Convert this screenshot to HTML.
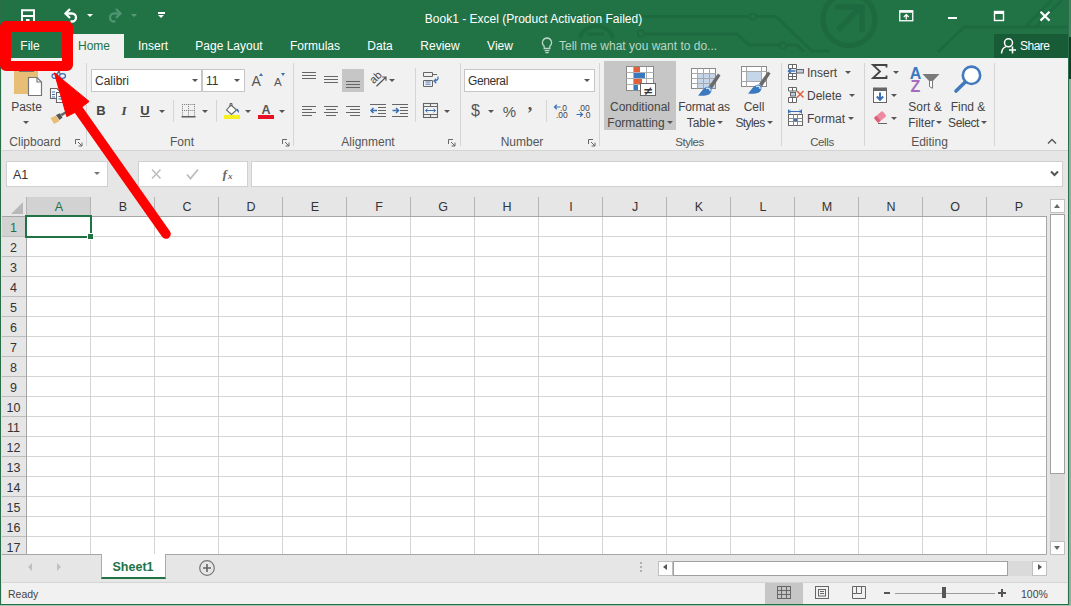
<!DOCTYPE html>
<html>
<head>
<meta charset="utf-8">
<title>Book1 - Excel</title>
<style>
html,body{margin:0;padding:0;}
body{width:1071px;height:606px;overflow:hidden;background:#e6e6e6;font-family:"Liberation Sans",sans-serif;font-size:12px;color:#444;position:relative;}
.abs{position:absolute;}
.t{position:absolute;white-space:nowrap;line-height:16px;height:16px;}
.c{transform:translateX(-50%);}
#win{position:absolute;left:0;top:0;width:1071px;height:606px;overflow:hidden;}
#titlebar{left:0;top:0;width:1071px;height:58px;background:#217346;}
#ribbon{left:2px;top:58px;width:1066px;height:92px;background:#f1f1f1;}
#ribline{left:2px;top:150px;width:1066px;height:1px;background:#d4d4d4;}
.tab{color:#fff;font-size:12px;top:38px;}
.lbl{color:#555;font-size:12px;top:134px;}
.sep{position:absolute;width:1px;background:#d5d5d5;top:63px;height:83px;}
.box{position:absolute;background:#fff;border:1px solid #c6c6c6;box-sizing:border-box;}
.dd{position:absolute;width:0;height:0;border-left:3px solid transparent;border-right:3px solid transparent;border-top:3px solid #555;}
.colh{position:absolute;top:198px;height:18px;line-height:18px;text-align:center;width:64px;color:#333;font-size:12.5px;}
.rowh{position:absolute;left:2px;width:23px;height:20px;line-height:20px;text-align:center;color:#333;font-size:12.5px;}
</style>
</head>
<body>
<div id="win">

<!-- ===== title bar + tab strip ===== -->
<div id="titlebar" class="abs"></div>
<!-- decorative circuit pattern -->
<svg class="abs" style="left:560px;top:0" width="511" height="58" viewBox="560 0 511 58">
  <g fill="none" stroke="#1e6a40" stroke-width="3">
    <path d="M560 16.500 H749 M756.500 16.500 H776 L812 51 H830"/>
    <circle cx="753" cy="16.500" r="3.300" stroke-width="2"/>
    <path d="M645 34 H737 L749 45 H779 M786.500 45 H797 L804 52"/>
    <circle cx="641" cy="33.500" r="3.300" stroke-width="2"/>
    <circle cx="783" cy="45.500" r="3.300" stroke-width="2"/>
    <circle cx="849" cy="19.500" r="26" stroke-width="5.500"/>
    <path d="M838 30 L859 9" stroke-width="6"/>
    <path d="M835 7 H862 V32" stroke-width="5.500"/>
    <path d="M938 52 L964 27 H1071"/>
    <path d="M1026 26 L1052 0 M1036 26 L1062 0"/>
    <path d="M579.500 38 A18 18 0 0 1 613.500 38" stroke-width="4"/>
    <path d="M587 34 H604"/>
  </g>
</svg>

<!-- quick access toolbar -->
<svg class="abs" style="left:20px;top:8px" width="16" height="15" viewBox="0 0 16 15">
  <path d="M2 2.200 H14 V14 H2 Z" fill="none" stroke="#fff" stroke-width="2"/>
  <rect x="2" y="7" width="12" height="2" fill="#fff"/>
  <rect x="6" y="11" width="3.500" height="3" fill="#fff"/>
</svg>
<svg class="abs" style="left:63px;top:7px" width="17" height="16" viewBox="0 0 17 16">
  <path d="M3 6.500 H9 A4 4 0 0 1 9 14.500 H7.500" fill="none" stroke="#fff" stroke-width="2.300"/>
  <path d="M7 2 L2.500 6.500 L7 11" fill="none" stroke="#fff" stroke-width="2.300"/>
</svg>
<div class="dd" style="left:87px;top:14px;border-top-color:#fff;"></div>
<svg class="abs" style="left:106px;top:7px" width="17" height="16" viewBox="0 0 17 16">
  <path d="M14 6.500 H8 A4 4 0 0 0 8 14.500 H9.500" fill="none" stroke="#4f9471" stroke-width="2.300"/>
  <path d="M10 2 L14.500 6.500 L10 11" fill="none" stroke="#4f9471" stroke-width="2.300"/>
</svg>
<div class="dd" style="left:131px;top:14px;border-top-color:#5c9c7b;"></div>
<div class="abs" style="left:158px;top:12px;width:7px;height:1.5px;background:#fff;"></div>
<div class="dd" style="left:158px;top:15px;border-left-width:3.5px;border-right-width:3.5px;border-top-width:3.5px;border-top-color:#fff;"></div>

<!-- title -->
<div class="t c" style="left:533.500px;top:11px;color:#fff;font-size:12px;">Book1 - Excel (Product Activation Failed)</div>

<!-- window controls -->
<svg class="abs" style="left:899px;top:10px" width="15" height="12" viewBox="0 0 15 12">
  <rect x="0.75" y="0.75" width="13" height="10" fill="none" stroke="#fff" stroke-width="1.3"/>
  <rect x="0.75" y="0.75" width="13" height="2" fill="#fff"/>
  <path d="M7.25 9.5 V5 M4.8 7 L7.25 4.6 L9.7 7" fill="none" stroke="#fff" stroke-width="1.3"/>
</svg>
<div class="abs" style="left:948px;top:17px;width:9px;height:2px;background:#fff;"></div>
<svg class="abs" style="left:993px;top:10px" width="12" height="12" viewBox="0 0 12 12">
  <rect x="1.5" y="1.5" width="9" height="9" fill="none" stroke="#fff" stroke-width="1.4"/>
  <rect x="1" y="1" width="10" height="3" fill="#fff"/>
</svg>
<svg class="abs" style="left:1039px;top:10px" width="12" height="12" viewBox="0 0 12 12">
  <path d="M1.5 1.8 L10.5 10.6 M10.5 1.8 L1.5 10.6" stroke="#fff" stroke-width="2.2" fill="none"/>
</svg>

<!-- tabs -->
<div class="abs" style="left:73px;top:34px;width:51px;height:24px;background:#f1f1f1;"></div>
<div class="t c tab" style="left:30px;">File</div>
<div class="t c tab" style="left:94px;color:#217346;">Home</div>
<div class="t c tab" style="left:153px;">Insert</div>
<div class="t c tab" style="left:229px;">Page Layout</div>
<div class="t c tab" style="left:315px;">Formulas</div>
<div class="t c tab" style="left:380px;">Data</div>
<div class="t c tab" style="left:440px;">Review</div>
<div class="t c tab" style="left:500px;">View</div>
<svg class="abs" style="left:541px;top:37px" width="12" height="17" viewBox="0 0 12 17">
  <path d="M6 1 A4.6 4.6 0 0 0 3.2 9.2 V11.5 H8.8 V9.2 A4.6 4.6 0 0 0 6 1 Z" fill="none" stroke="#b9d6c6" stroke-width="1.3"/>
  <path d="M3.6 13.6 H8.4 M4.4 15.6 H7.6" stroke="#b9d6c6" stroke-width="1.2"/>
</svg>
<div class="t tab" style="left:559px;color:#b9d6c6;">Tell me what you want to do...</div>

<!-- share -->
<div class="abs" style="left:994px;top:34px;width:74px;height:24px;background:#185c37;"></div>
<svg class="abs" style="left:1000px;top:37px" width="18" height="18" viewBox="0 0 18 18">
  <circle cx="8.5" cy="5.8" r="4" fill="none" stroke="#fff" stroke-width="1.5"/>
  <path d="M1.5 16.5 C1.8 12.5 4 10.2 6.2 9.6" fill="none" stroke="#fff" stroke-width="1.5"/>
  <path d="M12.5 9.5 V16.5 M9 13 H16" stroke="#fff" stroke-width="1.5"/>
</svg>
<div class="t tab" style="left:1020px;letter-spacing:-0.500px;">Share</div>


<!-- ===== ribbon ===== -->
<div id="ribbon" class="abs"></div>
<div id="ribline" class="abs"></div>
<!-- ===== Clipboard ===== -->
<svg class="abs" style="left:10px;top:64px" width="34" height="38" viewBox="0 0 34 38">
  <rect x="4" y="3" width="24" height="27" fill="#e8be76"/>
  <rect x="9" y="1" width="15" height="7" fill="#777"/>
  <path d="M18.500 13.500 H27 L31.500 18 V31.500 H18.500 Z" fill="#fff" stroke="#777" stroke-width="1.200"/>
  <path d="M27 13.500 V18 H31.500" fill="none" stroke="#777" stroke-width="1.200"/>
</svg>
<div class="t c" style="left:26.500px;top:99px;">Paste</div>
<div class="dd" style="left:22.500px;top:121px;"></div>
<!-- cut / copy / painter -->
<svg class="abs" style="left:50px;top:67px" width="18" height="14" viewBox="0 0 18 14">
  <ellipse cx="5" cy="9" rx="3" ry="2.4" fill="none" stroke="#3a6fb5" stroke-width="1.3"/>
  <ellipse cx="12.5" cy="9" rx="3" ry="2.4" fill="none" stroke="#3a6fb5" stroke-width="1.3"/>
  <path d="M7 7 L12 1 M10.5 7 L6 1" stroke="#666" stroke-width="1.2"/>
</svg>
<svg class="abs" style="left:49px;top:87px" width="18" height="17" viewBox="0 0 18 17">
  <path d="M1.5 1.5 H8 L10.5 4 V11.5 H1.5 Z" fill="#fff" stroke="#666" stroke-width="1.1"/>
  <path d="M7.5 5.5 H14 L16.5 8 V15.5 H7.5 Z" fill="#fff" stroke="#666" stroke-width="1.1"/>
  <path d="M3 5 H6 M3 7.5 H6 M3 10 H6 M9.5 9.5 H14 M9.5 12 H14" stroke="#3a6fb5" stroke-width="1"/>
</svg>
<svg class="abs" style="left:49px;top:109px" width="20" height="16" viewBox="0 0 20 16">
  <path d="M1.5 9 L7 6.5 L10.5 12 L5 15 Z" fill="#e8be76"/>
  <path d="M7 6 L11 4.2 L13.5 8.5 L10.5 11 Z" fill="#555"/>
  <path d="M11.5 5 L17.5 1.8 L18.5 3.6 L13 7.2 Z" fill="#666"/>
</svg>
<div class="t c lbl" style="left:35px;">Clipboard</div>
<svg class="abs launcher" style="left:75px;top:139px" width="8" height="8" viewBox="0 0 8 8"><path d="M0.5 5 V0.5 H5 M3 3 L7 7 M7 3.6 V7 H3.6" fill="none" stroke="#666" stroke-width="1"/></svg>
<div class="sep" style="left:86px;"></div>

<!-- ===== Font ===== -->
<div class="box" style="left:91px;top:69px;width:111px;height:23px;"></div>
<div class="box" style="left:202px;top:69px;width:43px;height:23px;"></div>
<div class="t" style="left:95px;top:73px;color:#333;">Calibri</div>
<div class="dd" style="left:192px;top:79px;"></div>
<div class="t" style="left:206px;top:73px;color:#333;">11</div>
<div class="dd" style="left:234px;top:79px;"></div>
<div class="t" style="left:251.500px;top:73px;font-size:14px;color:#555;">A</div>
<div class="abs" style="left:259px;top:73px;width:0;height:0;border-left:2.5px solid transparent;border-right:2.5px solid transparent;border-bottom:3px solid #3a6fb5;"></div>
<div class="t" style="left:274px;top:74px;font-size:11.500px;color:#555;">A</div>
<div class="abs" style="left:281px;top:73px;width:0;height:0;border-left:2.5px solid transparent;border-right:2.5px solid transparent;border-top:3px solid #3a6fb5;"></div>

<div class="t c" style="left:101px;top:103px;font-weight:bold;font-size:13px;color:#444;">B</div>
<div class="t c" style="left:124px;top:103px;font-style:italic;font-size:13px;font-family:'Liberation Serif',serif;font-weight:bold;color:#444;">I</div>
<div class="t c" style="left:145px;top:103px;font-size:13px;font-weight:bold;color:#444;text-decoration:underline;">U</div>
<div class="dd" style="left:159px;top:110px;"></div>
<div class="sep" style="left:173px;top:100px;height:22px;"></div>
<svg class="abs" style="left:181px;top:104px" width="15" height="14" viewBox="0 0 15 14">
  <path d="M1 0.5 H14 M1 6.5 H14 M1.5 0 V12 M7.5 0 V12 M13.5 0 V12" stroke="#777" stroke-width="1" stroke-dasharray="1 1.1" fill="none"/>
  <path d="M0.5 12.8 H14.5" stroke="#444" stroke-width="1.3"/>
</svg>
<div class="dd" style="left:202px;top:110px;"></div>
<div class="sep" style="left:216px;top:100px;height:22px;"></div>
<svg class="abs" style="left:224px;top:102px" width="17" height="18" viewBox="0 0 17 18">
  <path d="M7 3 L12.5 8 L7.5 12.5 L2.5 8 Z" fill="#fff" stroke="#666" stroke-width="1.1"/>
  <path d="M6 5 V1.5 H8 V4" fill="none" stroke="#666" stroke-width="1"/>
  <path d="M12.5 6.5 C15 7 15.5 9.5 14.5 11 C13.5 9.5 13 8.5 12.5 8 Z" fill="#3a6fb5"/>
  <rect x="0" y="13" width="16" height="4" fill="#f7f01f"/>
</svg>
<div class="dd" style="left:245px;top:110px;"></div>
<div class="t c" style="left:266px;top:102px;font-size:12.500px;font-weight:bold;color:#555;">A</div>
<div class="abs" style="left:258px;top:115px;width:16px;height:4px;background:#e81123;"></div>
<div class="dd" style="left:279px;top:110px;"></div>
<div class="t c lbl" style="left:182px;">Font</div>
<svg class="abs launcher" style="left:282px;top:139px" width="8" height="8" viewBox="0 0 8 8"><path d="M0.5 5 V0.5 H5 M3 3 L7 7 M7 3.6 V7 H3.6" fill="none" stroke="#666" stroke-width="1"/></svg>
<div class="sep" style="left:293px;"></div>
<!-- ===== Alignment ===== -->
<div class="abs" style="left:342px;top:69px;width:22px;height:23px;background:#c6c6c6;"></div>
<svg class="abs" style="left:300px;top:68px" width="160" height="54" viewBox="300 68 160 54">
  <g stroke="#666" stroke-width="1" fill="none">
    <!-- top / middle / bottom align -->
    <path d="M302 72.5 H316 M302 75.5 H316 M302 78.5 H316"/>
    <path d="M324 76.5 H338 M324 79.5 H338 M324 82.5 H338"/>
    <path d="M346 81.5 H360 M346 84.5 H360 M346 87.5 H360"/>
    <!-- left / center / right -->
    <path d="M302 106.5 H316 M302 109.5 H312 M302 112.5 H316 M302 115.5 H312"/>
    <path d="M324 106.5 H338 M326 109.5 H336 M324 112.5 H338 M326 115.5 H336"/>
    <path d="M346 106.5 H360 M350 109.5 H360 M346 112.5 H360 M350 115.5 H360"/>
    <!-- indent icons -->
    <path d="M370 104.5 H386 M378 107.5 H386 M378 110.5 H386 M378 113.5 H386 M370 116.5 H386"/>
    <path d="M392 104.5 H408 M400 107.5 H408 M400 110.5 H408 M400 113.5 H408 M392 116.5 H408"/>
  </g>
  <g stroke="#3a6fb5" stroke-width="1.5" fill="none">
    <path d="M371 110.5 H377 M373.5 108 L371 110.5 L373.5 113"/>
    <path d="M392.5 110.5 H398.5 M396 108 L398.5 110.5 L396 113"/>
  </g>
  <!-- orientation -->
  <text x="0" y="0" transform="translate(373.800 84.300) rotate(-45)" font-family="Liberation Sans, sans-serif" font-size="11" fill="#444">ab</text>
  <path d="M376.500 86.300 L385.800 77.200 M382.300 77 H386 V80.700" stroke="#555" stroke-width="1.200" fill="none"/>
  <!-- wrap text -->
  <g stroke="#666" stroke-width="1" fill="none">
    <path d="M423.500 72.500 H432.500 V76.500 H423.500 Z M423.500 80.500 V86.500 H432.500 V80.500 Z M432.500 74.500 H437"/>
  </g>
  <path d="M425.500 82 H430.500 M425.500 84.200 H430.500" stroke="#4a7ab8" stroke-width="1" fill="none"/>
  <path d="M438 76.500 C438.500 79.500 437 81 434 81 M436.300 78.800 L434 81 L436.300 83.200" stroke="#3a6fb5" stroke-width="1.200" fill="none"/>
  <!-- merge -->
  <g stroke="#666" stroke-width="1.1" fill="none">
    <rect x="423.5" y="103.5" width="14" height="14"/>
    <path d="M423.500 106.500 H437.500 M423.500 114.500 H437.500 M430.500 103.500 V106.500 M430.500 114.500 V117.500"/>
  </g>
  <path d="M425.5 110.5 H435.5 M427.5 108.8 L425.5 110.5 L427.5 112.2 M433.5 108.8 L435.5 110.5 L433.5 112.2" stroke="#3a6fb5" stroke-width="1" fill="none"/>
</svg>
<div class="dd" style="left:389px;top:79px;"></div>
<div class="sep" style="left:415px;top:68px;height:54px;"></div>
<div class="dd" style="left:444px;top:110px;"></div>
<div class="t c lbl" style="left:368px;">Alignment</div>
<svg class="abs launcher" style="left:448px;top:139px" width="8" height="8" viewBox="0 0 8 8"><path d="M0.5 5 V0.5 H5 M3 3 L7 7 M7 3.6 V7 H3.6" fill="none" stroke="#666" stroke-width="1"/></svg>
<div class="sep" style="left:460px;"></div>

<!-- ===== Number ===== -->
<div class="box" style="left:464px;top:69px;width:131px;height:23px;"></div>
<div class="t" style="left:468px;top:73px;color:#333;letter-spacing:-0.400px;">General</div>
<div class="dd" style="left:584px;top:79px;"></div>
<div class="t c" style="left:475.500px;top:103px;font-size:16px;color:#555;">$</div>
<div class="dd" style="left:488px;top:110px;"></div>
<div class="t c" style="left:509.500px;top:104px;font-size:15px;color:#555;">%</div>
<div class="t c" style="left:530px;top:96px;font-size:18px;font-weight:bold;color:#555;font-family:'Liberation Serif',serif;">,</div>
<div class="sep" style="left:546px;top:100px;height:22px;"></div>
<svg class="abs" style="left:553px;top:103px" width="40" height="16" viewBox="553 103 40 16">
  <g font-family="Liberation Sans, sans-serif" font-size="8.500" fill="#444">
    <text x="560" y="110.500">.0</text><text x="556" y="118">.00</text>
    <text x="578" y="110.500">.00</text><text x="583.500" y="118">.0</text>
  </g>
  <g stroke="#3a6fb5" stroke-width="1.2" fill="none">
    <path d="M554.5 107 H560.5 M556.8 104.8 L554.5 107 L556.8 109.2"/>
    <path d="M576.5 114.5 H582.5 M580.2 112.3 L582.5 114.5 L580.2 116.7"/>
  </g>
</svg>
<div class="t c lbl" style="left:522px;">Number</div>
<svg class="abs launcher" style="left:588px;top:139px" width="8" height="8" viewBox="0 0 8 8"><path d="M0.5 5 V0.5 H5 M3 3 L7 7 M7 3.6 V7 H3.6" fill="none" stroke="#666" stroke-width="1"/></svg>
<div class="sep" style="left:599px;"></div>
<!-- ===== Styles ===== -->
<div class="abs" style="left:604px;top:61px;width:72px;height:69px;background:#c6c6c6;"></div>
<svg class="abs" style="left:624px;top:64px" width="34" height="34" viewBox="624 64 34 34">
  <rect x="626.5" y="66.5" width="27" height="24" fill="#fff" stroke="#8a8a8a" stroke-width="1"/>
  <path d="M626.5 72.5 H653.5 M626.5 78.5 H653.5 M626.5 84.5 H653.5 M633.5 66.5 V90.5 M646.5 66.5 V90.5" stroke="#b0b0b0" stroke-width="1" fill="none"/>
  <rect x="634" y="67" width="6" height="5" fill="#e0603c"/>
  <rect x="634" y="73" width="11" height="5" fill="#3a78c0"/>
  <rect x="634" y="79" width="8" height="5" fill="#e0603c"/>
  <rect x="634" y="85" width="4" height="5" fill="#3a78c0"/>
  <rect x="640.5" y="83.5" width="15" height="12" fill="#fff" stroke="#666" stroke-width="1"/>
  <text x="648" y="94.500" text-anchor="middle" font-family="DejaVu Sans, sans-serif" font-size="12" font-weight="bold" fill="#333">≠</text>
</svg>
<div class="t c" style="left:640px;top:99px;">Conditional</div>
<div class="t c" style="left:636px;top:115px;">Formatting</div>
<div class="dd" style="left:667px;top:121px;"></div>

<svg class="abs" style="left:688px;top:64px" width="36" height="34" viewBox="688 64 36 34">
  <rect x="691.5" y="68.5" width="24" height="20" fill="#fff" stroke="#8a8a8a" stroke-width="1"/>
  <rect x="698" y="74" width="17" height="14" fill="#c5d5ea"/>
  <path d="M691.5 73.5 H715.5 M691.5 78.5 H715.5 M691.5 83.5 H715.5 M697.5 68.5 V88.5 M703.5 68.5 V88.5 M709.5 68.5 V88.5" stroke="#a8a8a8" stroke-width="1" fill="none"/>
  <path d="M709 86 L718 73.5 L720.5 75.5 L712 88.5 Z" fill="#6a6a6a"/>
  <path d="M698 95.5 C701 93 703 87 708.5 86.5 C712.5 87 712.5 92 709 94.5 C706 96 701 96 698 95.5 Z" fill="#3a78c0"/>
  <path d="M706 88.5 C708 87.5 710.5 88.5 710 91" stroke="#dfe9f5" stroke-width="1.4" fill="none"/>
</svg>
<div class="t c" style="left:704px;top:99px;letter-spacing:-0.300px;">Format as</div>
<div class="t c" style="left:701px;top:115px;">Table</div>
<div class="dd" style="left:717px;top:121px;"></div>

<svg class="abs" style="left:738px;top:64px" width="36" height="34" viewBox="738 64 36 34">
  <rect x="741.5" y="66.5" width="25" height="20" fill="#fff" stroke="#8a8a8a" stroke-width="1"/>
  <path d="M741.5 71.5 H766.5 M741.5 81.5 H766.5 M746.5 66.5 V86.5 M761.5 66.5 V86.5" stroke="#a8a8a8" stroke-width="1" fill="none"/>
  <rect x="747" y="72" width="14" height="9" fill="#c5d5ea"/>
  <path d="M759 84 L768 71.5 L770.5 73.5 L762 86.5 Z" fill="#6a6a6a"/>
  <path d="M748 93.5 C751 91 753 85 758.5 84.5 C762.5 85 762.5 90 759 92.5 C756 94 751 94 748 93.5 Z" fill="#3a78c0"/>
  <path d="M756 86.5 C758 85.5 760.5 86.5 760 89" stroke="#dfe9f5" stroke-width="1.4" fill="none"/>
</svg>
<div class="t c" style="left:754px;top:99px;">Cell</div>
<div class="t c" style="left:750px;top:115px;letter-spacing:-0.600px;">Styles</div>
<div class="dd" style="left:767px;top:121px;"></div>
<div class="t c lbl" style="left:689.500px;font-size:11.500px;letter-spacing:-0.500px;">Styles</div>
<div class="sep" style="left:781px;"></div>

<!-- ===== Cells ===== -->
<svg class="abs" style="left:786px;top:62px" width="20" height="66" viewBox="786 62 20 66">
  <!-- insert -->
  <g stroke="#666" stroke-width="1" fill="#fff">
    <path d="M788.500 64.500 H796.500 V68.500 H788.500 Z M792.500 64.500 V68.500"/>
    <path d="M788.500 73.500 H796.500 V79.500 H788.500 Z M788.500 76.500 H796.500 M792.500 73.500 V79.500"/>
    <rect x="796.500" y="69.500" width="7" height="3.500" fill="#c3cfdf"/>
  </g>
  <path d="M788.500 71 H795.500 M791 68.500 L788.500 71 L791 73.500" stroke="#3a6fb5" stroke-width="1.500" fill="none"/>
  <!-- delete -->
  <g stroke="#666" stroke-width="1" fill="#fff">
    <path d="M788.500 87.500 H796.500 V91 H788.500 Z M792.500 87.500 V91"/>
    <rect x="790.500" y="92.500" width="5" height="3.500" fill="#c3cfdf"/>
    <path d="M788.500 97.500 H796.500 V102.500 H788.500 Z M792.500 97.500 V102.500"/>
  </g>
  <path d="M797 91 L803.500 97.500 M803.500 91 L797 97.500" stroke="#e0603c" stroke-width="1.500" fill="none"/>
  <!-- format -->
  <path d="M788.500 111.500 H801.500 M788.500 109.500 V113.500 M801.500 109.500 V113.500 M790.500 110 L788.800 111.500 L790.500 113 M799.500 110 L801.200 111.500 L799.500 113" stroke="#3a6fb5" stroke-width="1" fill="none"/>
  <rect x="788.500" y="114.500" width="14" height="11" fill="#fff" stroke="#666" stroke-width="1"/>
  <path d="M788.500 118.500 H802.500 M788.500 121.500 H802.500 M793.500 114.500 V125.500 M797.500 114.500 V125.500" stroke="#8a8a8a" stroke-width="1" fill="none"/>
  <rect x="794" y="119" width="3" height="2" fill="#3a6fb5"/>
</svg>
<div class="t" style="left:807px;top:65px;">Insert</div>
<div class="dd" style="left:845px;top:71px;"></div>
<div class="t" style="left:807px;top:88px;">Delete</div>
<div class="dd" style="left:849px;top:94px;"></div>
<div class="t" style="left:807px;top:111px;">Format</div>
<div class="dd" style="left:848px;top:117px;"></div>
<div class="t c lbl" style="left:822px;font-size:11.500px;letter-spacing:-0.400px;">Cells</div>
<div class="sep" style="left:864px;"></div>

<!-- ===== Editing ===== -->
<svg class="abs" style="left:870px;top:62px" width="120" height="66" viewBox="870 62 120 66">
  <path d="M886.500 67.500 V65 H873 L880 71.500 L873 78 H886.500 V75.500" fill="none" stroke="#444" stroke-width="1.8"/>
  <rect x="873.5" y="88" width="13" height="14.500" fill="#fff" stroke="#666" stroke-width="1"/>
  <rect x="873.5" y="88" width="13" height="3" fill="#666"/>
  <path d="M880 92.500 V99.500 M876.800 96.500 L880 99.800 L883.200 96.500" stroke="#3a6fb5" stroke-width="2" fill="none"/>
  <rect x="-5" y="-3.300" width="11" height="6.600" rx="1.200" transform="translate(879.800 117.200) rotate(-40)" fill="#ee8aa0"/>
  <rect x="-5" y="-3.300" width="3.500" height="6.600" rx="1" transform="translate(879.800 117.200) rotate(-40)" fill="#e0607c"/>
  <path d="M878 123.500 H887" stroke="#666" stroke-width="1"/>
  <!-- sort & filter -->
  <text x="909.800" y="78.500" font-family="Liberation Sans, sans-serif" font-size="16" font-weight="bold" fill="#3a78c0">A</text>
  <text x="910.500" y="92" font-family="Liberation Sans, sans-serif" font-size="16" font-weight="bold" fill="#a56cc0">Z</text>
  <path d="M922.500 74 H939.500 L932.500 81.500 H929.500 Z" fill="#7a7a7a"/>
  <path d="M929.500 81 V86.500 L932.500 88.300 V81" fill="#fff" stroke="#7a7a7a" stroke-width="1"/>
  <!-- find & select -->
  <path d="M965 82.200 L956 91" stroke="#4079bd" stroke-width="3.600" stroke-linecap="round"/>
  <circle cx="971.500" cy="75.300" r="8.700" fill="#fff" stroke="#4079bd" stroke-width="2.600"/>
</svg>
<div class="dd" style="left:893px;top:71px;"></div>
<div class="dd" style="left:891px;top:94px;"></div>
<div class="dd" style="left:891px;top:117px;"></div>
<div class="t c" style="left:925px;top:99px;">Sort &amp;</div>
<div class="t c" style="left:921.500px;top:115px;">Filter</div>
<div class="dd" style="left:936px;top:121px;"></div>
<div class="t c" style="left:968px;top:99px;">Find &amp;</div>
<div class="t c" style="left:963.500px;top:115px;letter-spacing:-0.400px;">Select</div>
<div class="dd" style="left:981px;top:121px;"></div>
<div class="t c lbl" style="left:929.500px;">Editing</div>
<div class="sep" style="left:994px;"></div>
<svg class="abs" style="left:1047px;top:138px" width="10" height="7" viewBox="0 0 10 7"><path d="M1 5.500 L5 1.500 L9 5.500" fill="none" stroke="#555" stroke-width="1.400"/></svg>


<!-- ===== formula bar ===== -->
<div class="box" style="left:6px;top:161px;width:102px;height:26px;border-color:#d0d0d0;"></div>
<div class="t" style="left:13px;top:167px;color:#333;font-size:12.500px;">A1</div>
<div class="dd" style="left:94px;top:172px;border-top-color:#777;"></div>
<div class="box" style="left:138px;top:161px;width:110px;height:26px;border-color:#d0d0d0;"></div>
<svg class="abs" style="left:150px;top:167px" width="90" height="14" viewBox="150 167 90 14">
  <path d="M152 169.500 L160.500 178.500 M160.500 169.500 L152 178.500" stroke="#bdbdbd" stroke-width="1.500" fill="none"/>
  <path d="M187 174.500 L190.500 178.500 L198 169.500" stroke="#bdbdbd" stroke-width="1.800" fill="none"/>
  <text x="222.500" y="178.500" font-family="Liberation Serif, serif" font-style="italic" font-weight="bold" font-size="13" fill="#666">f</text>
  <text x="228" y="179" font-family="Liberation Serif, serif" font-style="italic" font-weight="bold" font-size="9" fill="#666">x</text>
</svg>
<div class="box" style="left:251px;top:161px;width:812px;height:26px;border-color:#d0d0d0;"></div>
<svg class="abs" style="left:1050px;top:170px" width="9" height="7" viewBox="0 0 9 7"><path d="M1 1.500 L4.500 5 L8 1.500" fill="none" stroke="#555" stroke-width="2"/></svg>


<!-- ===== grid ===== -->
<div class="abs" style="left:2px;top:197px;width:1047px;height:358px;background:#e6e6e6;"></div>
<div class="abs" style="left:26px;top:216px;width:1021px;height:338px;background:#fff;"></div>
<div class="abs" style="left:27px;top:197px;width:64px;height:19px;background:#d2d2d2;"></div>
<div class="abs" style="left:2px;top:217px;width:24px;height:20px;background:#d2d2d2;"></div>
<svg class="abs" style="left:10px;top:201px" width="14" height="14" viewBox="0 0 14 14"><path d="M13 1 V13 H1 Z" fill="#b9b9b9"/></svg>
<svg class="abs" style="left:0;top:0" width="1071" height="606" viewBox="0 0 1071 606"><path d="M26 236.5 H1047 M26 256.5 H1047 M26 276.5 H1047 M26 296.5 H1047 M26 316.5 H1047 M26 336.5 H1047 M26 356.5 H1047 M26 376.5 H1047 M26 396.5 H1047 M26 416.5 H1047 M26 436.5 H1047 M26 456.5 H1047 M26 476.5 H1047 M26 496.5 H1047 M26 516.5 H1047 M26 536.5 H1047" stroke="#d4d4d4" stroke-width="1" fill="none"/><path d="M26.5 216 V554 M90.5 216 V554 M154.5 216 V554 M218.5 216 V554 M282.5 216 V554 M346.5 216 V554 M410.5 216 V554 M474.5 216 V554 M538.5 216 V554 M602.5 216 V554 M666.5 216 V554 M730.5 216 V554 M794.5 216 V554 M858.5 216 V554 M922.5 216 V554 M986.5 216 V554" stroke="#d4d4d4" stroke-width="1" fill="none"/><path d="M2 236.5 H26 M2 256.5 H26 M2 276.5 H26 M2 296.5 H26 M2 316.5 H26 M2 336.5 H26 M2 356.5 H26 M2 376.5 H26 M2 396.5 H26 M2 416.5 H26 M2 436.5 H26 M2 456.5 H26 M2 476.5 H26 M2 496.5 H26 M2 516.5 H26 M2 536.5 H26" stroke="#bdbdbd" stroke-width="1" fill="none"/><path d="M26.5 197 V216 M90.5 197 V216 M154.5 197 V216 M218.5 197 V216 M282.5 197 V216 M346.5 197 V216 M410.5 197 V216 M474.5 197 V216 M538.5 197 V216 M602.5 197 V216 M666.5 197 V216 M730.5 197 V216 M794.5 197 V216 M858.5 197 V216 M922.5 197 V216 M986.5 197 V216" stroke="#b4b4b4" stroke-width="1" fill="none"/><path d="M2 216.500 H1047 M26.500 216 V554" stroke="#a6a6a6" stroke-width="1" fill="none"/><path d="M1046.500 216 V554.500 H2" stroke="#a6a6a6" stroke-width="1" fill="none"/></svg>
<div class="colh" style="left:27px;color:#217346;">A</div>
<div class="colh" style="left:91px;">B</div>
<div class="colh" style="left:155px;">C</div>
<div class="colh" style="left:219px;">D</div>
<div class="colh" style="left:283px;">E</div>
<div class="colh" style="left:347px;">F</div>
<div class="colh" style="left:411px;">G</div>
<div class="colh" style="left:475px;">H</div>
<div class="colh" style="left:539px;">I</div>
<div class="colh" style="left:603px;">J</div>
<div class="colh" style="left:667px;">K</div>
<div class="colh" style="left:731px;">L</div>
<div class="colh" style="left:795px;">M</div>
<div class="colh" style="left:859px;">N</div>
<div class="colh" style="left:923px;">O</div>
<div class="colh" style="left:987px;">P</div>
<div class="rowh" style="top:218px;color:#217346;">1</div>
<div class="rowh" style="top:238px;">2</div>
<div class="rowh" style="top:258px;">3</div>
<div class="rowh" style="top:278px;">4</div>
<div class="rowh" style="top:298px;">5</div>
<div class="rowh" style="top:318px;">6</div>
<div class="rowh" style="top:338px;">7</div>
<div class="rowh" style="top:358px;">8</div>
<div class="rowh" style="top:378px;">9</div>
<div class="rowh" style="top:398px;">10</div>
<div class="rowh" style="top:418px;">11</div>
<div class="rowh" style="top:438px;">12</div>
<div class="rowh" style="top:458px;">13</div>
<div class="rowh" style="top:478px;">14</div>
<div class="rowh" style="top:498px;">15</div>
<div class="rowh" style="top:518px;">16</div>
<div class="rowh" style="top:538px;">17</div>
<div class="abs" style="left:25px;top:215px;width:67px;height:23px;border:2px solid #217346;box-sizing:border-box;"></div>
<div class="abs" style="left:87px;top:233px;width:7px;height:7px;background:#217346;border:1px solid #fff;box-sizing:border-box;"></div>
<div class="abs" style="left:1049px;top:197px;width:19px;height:358px;background:#e6e6e6;"></div>
<div class="abs" style="left:1050px;top:214px;width:15px;height:327px;background:#dadada;"></div>
<div class="box" style="left:1050px;top:199px;width:15px;height:14px;border-color:#c0c0c0;"></div>
<div class="abs" style="left:1054px;top:204px;width:0;height:0;border-left:3.500px solid transparent;border-right:3.500px solid transparent;border-bottom:4px solid #666;"></div>
<div class="box" style="left:1050px;top:214px;width:15px;height:260px;border-color:#a0a0a0;"></div>
<div class="box" style="left:1050px;top:541px;width:15px;height:14px;border-color:#c0c0c0;"></div>
<div class="abs" style="left:1054px;top:546px;width:0;height:0;border-left:3.500px solid transparent;border-right:3.500px solid transparent;border-top:4px solid #666;"></div>


<!-- ===== sheet tabs / status ===== -->
<div class="abs" style="left:2px;top:555px;width:1065px;height:27px;background:#e6e6e6;"></div>
<div class="abs" style="left:28px;top:563px;width:0;height:0;border-top:4px solid transparent;border-bottom:4px solid transparent;border-right:4px solid #c0c0c0;"></div>
<div class="abs" style="left:57px;top:563px;width:0;height:0;border-top:4px solid transparent;border-bottom:4px solid transparent;border-left:4px solid #c0c0c0;"></div>
<div class="abs" style="left:101px;top:554px;width:65px;height:25px;background:#fff;border-bottom:2px solid #217346;border-left:1px solid #ababab;border-right:1px solid #ababab;box-sizing:border-box;"></div>
<div class="t c" style="left:133px;top:559px;color:#217346;font-weight:bold;font-size:12.500px;">Sheet1</div>
<svg class="abs" style="left:198px;top:559px" width="18" height="18" viewBox="0 0 18 18"><circle cx="9" cy="9" r="7.300" fill="none" stroke="#777" stroke-width="1.200"/><path d="M9 5 V13 M5 9 H13" stroke="#666" stroke-width="1.600"/></svg>
<div class="abs" style="left:640px;top:562px;width:2px;height:2px;background:#b0b0b0;box-shadow:0 4px 0 #b0b0b0,0 8px 0 #b0b0b0;"></div>
<div class="abs" style="left:658px;top:561px;width:389px;height:15px;background:#dadada;"></div>
<div class="box" style="left:658px;top:561px;width:15px;height:15px;border-color:#c0c0c0;"></div>
<div class="abs" style="left:663px;top:564px;width:0;height:0;border-top:3.500px solid transparent;border-bottom:3.500px solid transparent;border-right:4px solid #555;"></div>
<div class="box" style="left:673px;top:561px;width:335px;height:15px;border-color:#a0a0a0;"></div>
<div class="box" style="left:1032px;top:561px;width:15px;height:15px;border-color:#c0c0c0;"></div>
<div class="abs" style="left:1038px;top:564px;width:0;height:0;border-top:3.500px solid transparent;border-bottom:3.500px solid transparent;border-left:4px solid #555;"></div>

<div class="abs" style="left:2px;top:582px;width:1065px;height:22px;background:#f1f1f1;border-top:1px solid #d4d4d4;box-sizing:border-box;"></div>
<div class="t" style="left:8px;top:586px;font-size:10.500px;color:#444;">Ready</div>
<div class="abs" style="left:765px;top:583px;width:38px;height:21px;background:#c6c6c6;"></div>
<svg class="abs" style="left:770px;top:584px" width="100" height="18" viewBox="770 584 100 18">
  <g stroke="#666" stroke-width="1" fill="none">
    <rect x="777.500" y="586.500" width="13" height="12"/>
    <path d="M777.500 590.500 H790.500 M777.500 594.500 H790.500 M781.500 586.500 V598.500 M786.500 586.500 V598.500"/>
    <rect x="815.500" y="586.500" width="13" height="12"/>
    <rect x="818.500" y="589.500" width="7" height="6.500"/>
    <path d="M820 591.500 H824 M820 593.500 H824"/>
    <path d="M852.500 586.500 H865.500 V598.500 H852.500 Z M856.500 586.500 V593.500 H861.500 V586.500 M852.500 593.500 H856.500"/>
  </g>
</svg>
<div class="abs" style="left:884px;top:592px;width:6px;height:2px;background:#555;"></div>
<div class="abs" style="left:895px;top:592.500px;width:100px;height:1px;background:#9a9a9a;"></div>
<div class="abs" style="left:942px;top:587px;width:4px;height:11px;background:#555;"></div>
<div class="abs" style="left:998px;top:592px;width:8px;height:2px;background:#555;"></div>
<div class="abs" style="left:1001px;top:589px;width:2px;height:8px;background:#555;"></div>
<div class="t" style="left:1021px;top:586px;font-size:10.500px;color:#444;">100%</div>


<!-- ===== window border ===== -->
<div class="abs" style="left:0;top:0;width:1px;height:606px;background:#2a6e4a;"></div><div class="abs" style="left:1px;top:58px;width:1px;height:546px;background:#d3eadd;"></div>
<div class="abs" style="left:1068px;top:0;width:1px;height:606px;background:#2b6f4b;"></div><div class="abs" style="left:1069px;top:0;width:2px;height:606px;background:#8fae9c;"></div><div class="abs" style="left:1069px;top:0;width:2px;height:37px;background:#3f8560;"></div><div class="abs" style="left:1069px;top:37px;width:2px;height:42px;background:#123f27;"></div>
<div class="abs" style="left:0;top:603.500px;width:1069px;height:1.500px;background:#217346;"></div><div class="abs" style="left:0;top:605px;width:1071px;height:1px;background:#a9c2b4;"></div>

<!-- ===== red annotation ===== -->
<div class="abs" style="left:0;top:20.500px;width:73px;height:50px;box-sizing:border-box;border:solid #fe0000;border-width:11.500px 11px 10.500px 11px;border-radius:6px;"></div>
<svg class="abs" style="left:0;top:0" width="260" height="260" viewBox="0 0 260 260">
  <path d="M54.400 72.900 L89.100 101.400 L82.200 106.800 L74.700 112.600 L66.800 116.600 Z" fill="#fe0000" stroke="#fe0000" stroke-width="1" stroke-linejoin="round"/>
  <path d="M78.500 109.700 L166 234" stroke="#fe0000" stroke-width="9.600" stroke-linecap="round" fill="none"/>
</svg>


</div>
</body>
</html>
